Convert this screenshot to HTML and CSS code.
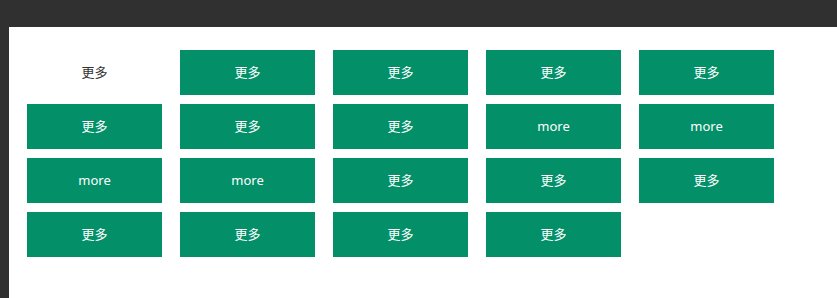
FILE: index.html
```html
<!DOCTYPE html>
<html lang="zh">
<head>
<meta charset="utf-8">
<link rel="stylesheet" href="styles.css">
</head>
<body>
<div class="panel">
  <div class="grid">
    <div class="item plain">更多</div>
    <div class="item">更多</div>
    <div class="item">更多</div>
    <div class="item">更多</div>
    <div class="item">更多</div>
    <div class="item">更多</div>
    <div class="item">更多</div>
    <div class="item">更多</div>
    <div class="item">more</div>
    <div class="item">more</div>
    <div class="item">more</div>
    <div class="item">more</div>
    <div class="item">更多</div>
    <div class="item">更多</div>
    <div class="item">更多</div>
    <div class="item">更多</div>
    <div class="item">更多</div>
    <div class="item">更多</div>
    <div class="item">更多</div>
  </div>
</div>
</body>
</html>
```
FILE: styles.css
```css
html, body {
  margin: 0;
  height: 100%;
}
body {
  background: #303030;
  padding: 27px 0 0 9px;
  box-sizing: border-box;
  font-family: "Noto Sans", "Noto Sans CJK SC", sans-serif;
  font-size: 13px;
}
.panel {
  background: #ffffff;
  height: 100%;
  padding: 23px 0 0 18px;
  box-sizing: border-box;
}
.grid {
  display: grid;
  grid-template-columns: repeat(5, 135px);
  grid-auto-rows: 45px;
  column-gap: 18px;
  row-gap: 9px;
}
.item {
  background: #038f68;
  color: #ffffff;
  display: flex;
  align-items: center;
  justify-content: center;
  padding-bottom: 2px;
  box-sizing: border-box;
}
.item.plain {
  background: transparent;
  color: #333333;
}
```
